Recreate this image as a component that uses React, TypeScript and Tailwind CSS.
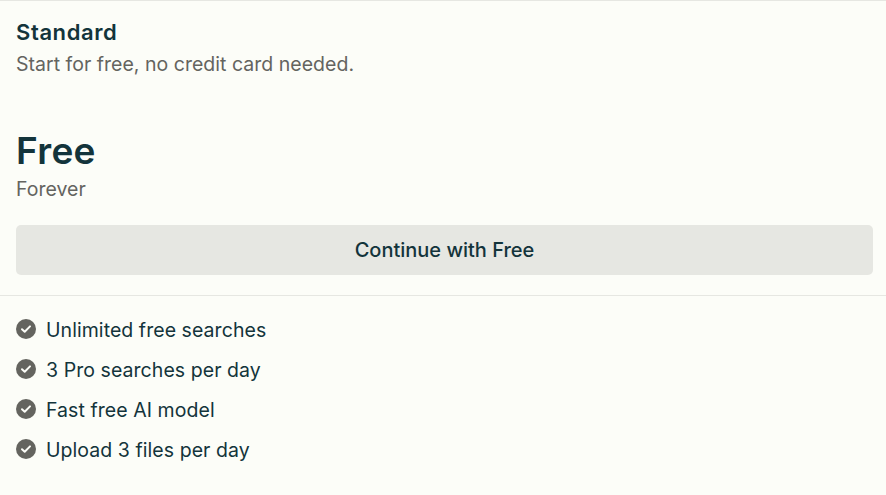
const features = [
  "Unlimited free searches",
  "3 Pro searches per day",
  "Fast free AI model",
  "Upload 3 files per day",
];

function CheckIcon() {
  return (
    <svg className="h-5 w-5 shrink-0" viewBox="0 0 20 20" fill="none">
      <circle cx="10" cy="10" r="10" fill="#64645f" />
      <path
        d="M6 10.2 8.7 12.7 14 7.4"
        stroke="#fcfdf8"
        strokeWidth="2"
        strokeLinecap="round"
        strokeLinejoin="round"
      />
    </svg>
  );
}

export default function App() {
  return (
    <div className="h-[495px] w-full overflow-hidden border-t border-[#e6e7e2] bg-[#fcfdf8] font-['Inter',sans-serif] text-[#13343b]">
      <div className="px-4 pt-[15px]">
        <h2 className="text-[22px] leading-8 font-semibold tracking-[0.6px]">Standard</h2>
        <p className="text-[19.5px] leading-8 tracking-[0.02px] text-[#64645f]">
          Start for free, no credit card needed.
        </p>
      </div>
      <div className="mt-[51px] px-4">
        <div className="text-[37px] leading-10 font-semibold tracking-[0.3px]">Free</div>
        <div className="mt-0.5 text-[19.5px] leading-8 text-[#64645f]">Forever</div>
      </div>
      <div className="mt-5 pr-[13px] pl-4">
        <button className="h-[50px] w-full rounded-[5px] bg-[#e6e7e2] text-[20px] leading-8 font-medium">
          Continue with Free
        </button>
      </div>
      <ul className="mt-5 border-t border-[#e6e7e2] px-4 pt-[13px]">
        {features.map((feature) => (
          <li key={feature} className="flex h-10 items-center gap-2.5">
            <CheckIcon />
            <span className="pt-px text-[19.5px] leading-8 tracking-[0.06px]">{feature}</span>
          </li>
        ))}
      </ul>
    </div>
  );
}
